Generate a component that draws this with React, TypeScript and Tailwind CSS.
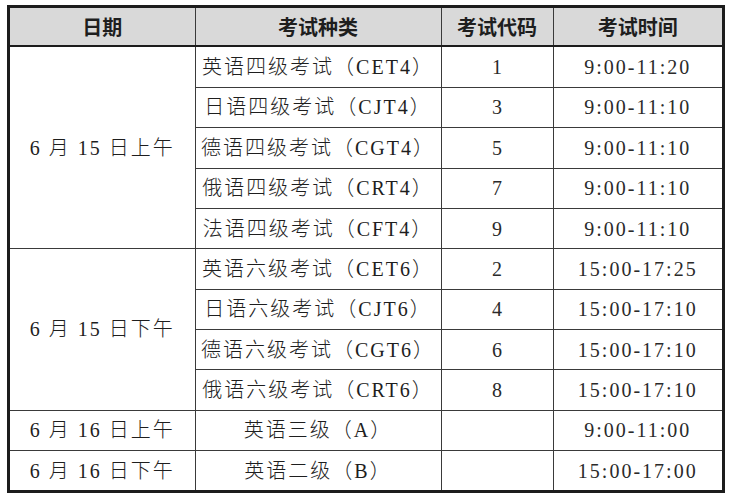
const rows: { date?: string; span?: number; kind: string; code: string; time: string }[] = [
  { date: "6 月 15 日上午", span: 5, kind: "英语四级考试（CET4）", code: "1", time: "9:00-11:20" },
  { kind: "日语四级考试（CJT4）", code: "3", time: "9:00-11:10" },
  { kind: "德语四级考试（CGT4）", code: "5", time: "9:00-11:10" },
  { kind: "俄语四级考试（CRT4）", code: "7", time: "9:00-11:10" },
  { kind: "法语四级考试（CFT4）", code: "9", time: "9:00-11:10" },
  { date: "6 月 15 日下午", span: 4, kind: "英语六级考试（CET6）", code: "2", time: "15:00-17:25" },
  { kind: "日语六级考试（CJT6）", code: "4", time: "15:00-17:10" },
  { kind: "德语六级考试（CGT6）", code: "6", time: "15:00-17:10" },
  { kind: "俄语六级考试（CRT6）", code: "8", time: "15:00-17:10" },
  { date: "6 月 16 日上午", span: 1, kind: "英语三级（A）", code: "", time: "9:00-11:00" },
  { date: "6 月 16 日下午", span: 1, kind: "英语二级（B）", code: "", time: "15:00-17:00" },
];

const cell = "border border-[#3a3a3a] text-center align-middle p-0";

export default function App() {
  return (
    <div className="min-h-[500px] bg-white pl-[7px] pt-[5px]">
      <div className="w-[718px] border-[3px] border-[#1c1c1c]">
        <table
          className="h-[482px] w-[712px] table-fixed border-collapse border-hidden text-[#1e1e1e]"
          style={{ fontFamily: '"Liberation Serif", "Noto Sans CJK SC", serif' }}
        >
          <colgroup>
            <col className="w-[185px]" />
            <col className="w-[246px]" />
            <col className="w-[112px]" />
            <col className="w-[169px]" />
          </colgroup>
          <thead>
            <tr
              className="h-[38px] bg-[#d9d9d9] text-[20px] font-bold"
              style={{ fontFamily: '"Noto Sans CJK SC", sans-serif' }}
            >
              {["日期", "考试种类", "考试代码", "考试时间"].map((h) => (
                <th key={h} className={`${cell} border-b-2 border-b-[#1c1c1c] leading-none`}>
                  {h}
                </th>
              ))}
            </tr>
          </thead>
          <tbody className="text-[20px] font-light leading-none">
            {rows.map((r, i) => (
              <tr key={i}>
                {r.date && (
                  <td rowSpan={r.span} className={`${cell} tracking-[2px]`}>
                    {r.date}
                  </td>
                )}
                <td className={`${cell} tracking-[2px]`}>{r.kind}</td>
                <td className={`${cell} text-[#2a2a2a]`}>{r.code}</td>
                <td className={`${cell} tracking-[2px] text-[#2a2a2a]`}>{r.time}</td>
              </tr>
            ))}
          </tbody>
        </table>
      </div>
    </div>
  );
}
